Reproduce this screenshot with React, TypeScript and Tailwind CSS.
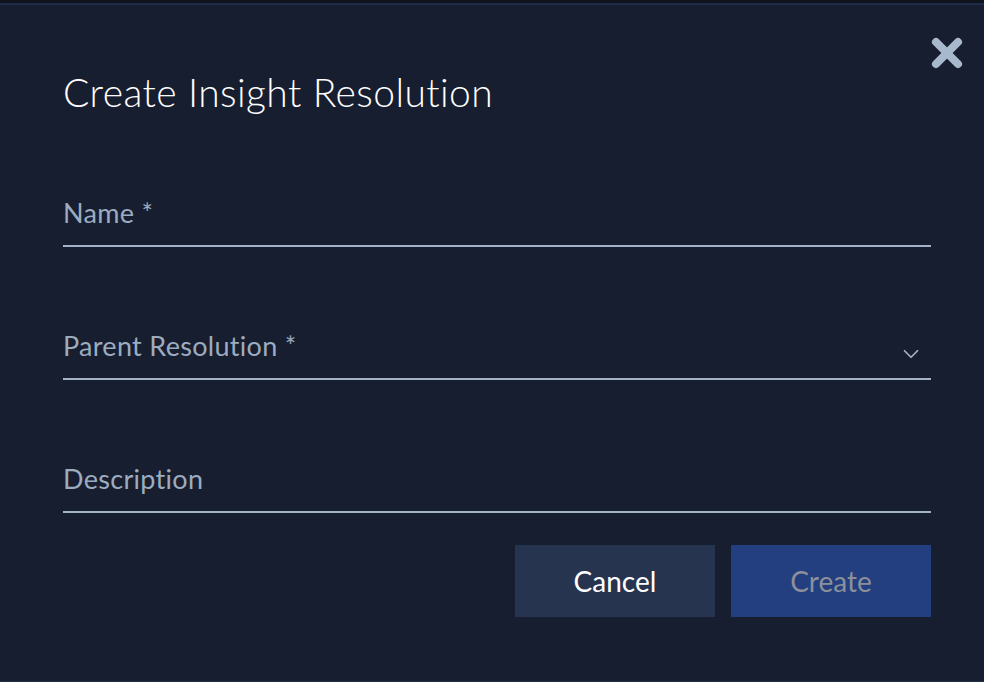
import { X, ChevronDown } from 'lucide-react'

const FIELDS = [
  { label: 'Name *', select: false },
  { label: 'Parent Resolution *', select: true },
  { label: 'Description', select: false },
]

export default function App() {
  return (
    <div className="w-[984px] h-[682px] bg-[#171e2f] flex flex-col overflow-hidden" style={{ fontFamily: 'Lato, "Open Sans", sans-serif' }}>
      <div className="h-[3px] bg-[#0f131c] shrink-0" />
      <div className="h-[2px] bg-[#1f2c48] shrink-0" />
      <div className="relative flex-1 flex flex-col pl-[63px] pr-[53px]">
        <button className="absolute top-[26px] right-[15px] text-[#a9b9cd]">
          <X size={44} strokeWidth={4.4} />
        </button>
        <h2 className="mt-[64px] text-[39px] leading-[46px] font-light tracking-[0.4px] text-white">Create Insight Resolution</h2>

        <div className="mt-[82px] flex flex-col gap-[83px]">
          {FIELDS.map((f) => (
            <div key={f.label} className="flex items-end justify-between border-b-2 border-[#a3b2c6] pb-[16px]">
              <span className="text-[27px] leading-[32px] tracking-[0.3px] text-[#9cacc0]">{f.label}</span>
              {f.select && <ChevronDown size={26} strokeWidth={1.6} className="text-[#a3b2c6] mr-[7px] mb-[-5px]" />}
            </div>
          ))}
        </div>

        <div className="mt-[32px] flex justify-end gap-4">
          <button className="w-[200px] h-[72px] bg-[#27344f] text-white text-[28px]">Cancel</button>
          <button disabled className="w-[200px] h-[72px] bg-[#243f7f] text-[#8b909b] text-[28px]">Create</button>
        </div>
      </div>
      <div className="h-px bg-[#232c45] shrink-0" />
    </div>
  )
}
